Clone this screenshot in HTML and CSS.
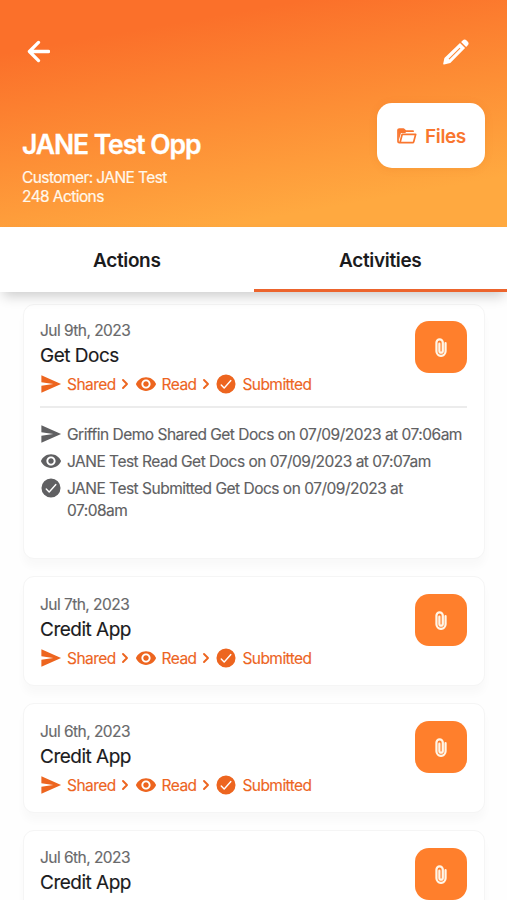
FILE: index.html
```html
<!DOCTYPE html>
<html lang="en">
<head>
<meta charset="utf-8">
<title>JANE Test Opp</title>
<link rel="stylesheet" href="styles.css">
</head>
<body>
<svg class="defs" width="0" height="0" aria-hidden="true">
  <symbol id="send" viewBox="0 0 24 24"><path d="M1.500 21.500 23 12 1.500 2.500V10l13 2-13 2z"/></symbol>
  <symbol id="eye" viewBox="0 0 24 24"><path d="M12 4.500C7 4.500 2.730 7.610 1 12c1.730 4.390 6 7.500 11 7.500s9.270-3.110 11-7.500c-1.730-4.390-6-7.500-11-7.500zM12 17c-2.760 0-5-2.240-5-5s2.240-5 5-5 5 2.240 5 5-2.240 5-5 5zm0-8c-1.660 0-3 1.340-3 3s1.340 3 3 3 3-1.340 3-3-1.340-3-3-3z"/></symbol>
  <symbol id="check" viewBox="0 0 24 24"><path fill-rule="evenodd" d="M12 1.600a10.400 10.400 0 1 0 0 20.800 10.400 10.400 0 0 0 0-20.800zm5.900 7.100-7.300 8.200a.8.8 0 0 1-1.150.05l-3.200-3.200a.8.8 0 0 1 1.130-1.130l2.600 2.600 6.750-7.550a.8.8 0 0 1 1.170 1.030z"/></symbol>
  <symbol id="chevron" viewBox="0 0 8 12"><path class="line" d="M2 2l4 4-4 4" stroke-width="1.900"/></symbol>
  <symbol id="clip" viewBox="0 0 14 22"><path class="line" d="M12.300 6v9.500a5.300 5.300 0 0 1-10.600 0V5.300a3.700 3.700 0 0 1 7.400 0v9.700a2 2 0 0 1-4 0V6.500" stroke-width="2.600"/></symbol>
</svg>

<header class="hero">
  <div class="toolbar">
    <svg class="back" viewBox="0 0 24 24"><path class="line" d="M12 2.500 2.500 12l9.500 9.500M3 12h19.500" stroke-width="3.400"/></svg>
    <svg class="edit" viewBox="0 0 26 26"><path d="M19.600 1.400a2.800 2.800 0 0 1 4 0l1 1a2.800 2.800 0 0 1 0 4l-1.500 1.500-5-5z"/><path fill-rule="evenodd" d="M17 3.900l5.100 5.100L7.300 23.900 1 25.600a.7.7 0 0 1-.8-.8l1.200-5.900zM16.700 8.700 5.600 19.800l.7.7L17.400 9.400z"/></svg>
  </div>
  <div class="summary">
    <div>
      <h1>JANE Test Opp</h1>
      <p>Customer: JANE Test</p>
      <p>248 Actions</p>
    </div>
    <button class="files">
      <svg viewBox="0 0 20 16"><path class="line" d="M3.700 14.700H2.300A1.300 1.300 0 0 1 1 13.400V2.300C1 1.500 1.500 1 2.300 1h4.200l2.200 2.200h7.400M3 14.700 5.200 6.300h13.500l-2 7.400a1.300 1.300 0 0 1-1.200 1z" stroke-width="1.700"/><path d="M1 1h5.500l2.200 2.200V5H4L1.800 12z"/></svg>
      <span>Files</span>
    </button>
  </div>
</header>

<nav class="tabs">
  <a class="tab">Actions</a>
  <a class="tab active">Activities</a>
</nav>

<main class="feed">
  <article class="card">
    <div class="card-head">
      <div>
        <div class="date">Jul 9th, 2023</div>
        <h2>Get Docs</h2>
        <div class="steps"><svg class="icon"><use href="#send"/></svg><span>Shared</span><svg class="chev"><use href="#chevron"/></svg><svg class="icon"><use href="#eye"/></svg><span>Read</span><svg class="chev"><use href="#chevron"/></svg><svg class="icon"><use href="#check"/></svg><span>Submitted</span></div>
      </div>
      <button class="attach"><svg><use href="#clip"/></svg></button>
    </div>
    <ul class="log">
      <li><svg class="icon"><use href="#send"/></svg><span>Griffin Demo Shared Get Docs on 07/09/2023 at 07:06am</span></li>
      <li><svg class="icon"><use href="#eye"/></svg><span>JANE Test Read Get Docs on 07/09/2023 at 07:07am</span></li>
      <li><svg class="icon"><use href="#check"/></svg><span>JANE Test Submitted Get Docs on 07/09/2023 at<br>07:08am</span></li>
    </ul>
  </article>

  <article class="card">
    <div class="card-head">
      <div>
        <div class="date">Jul 7th, 2023</div>
        <h2>Credit App</h2>
        <div class="steps"><svg class="icon"><use href="#send"/></svg><span>Shared</span><svg class="chev"><use href="#chevron"/></svg><svg class="icon"><use href="#eye"/></svg><span>Read</span><svg class="chev"><use href="#chevron"/></svg><svg class="icon"><use href="#check"/></svg><span>Submitted</span></div>
      </div>
      <button class="attach"><svg><use href="#clip"/></svg></button>
    </div>
  </article>

  <article class="card">
    <div class="card-head">
      <div>
        <div class="date">Jul 6th, 2023</div>
        <h2>Credit App</h2>
        <div class="steps"><svg class="icon"><use href="#send"/></svg><span>Shared</span><svg class="chev"><use href="#chevron"/></svg><svg class="icon"><use href="#eye"/></svg><span>Read</span><svg class="chev"><use href="#chevron"/></svg><svg class="icon"><use href="#check"/></svg><span>Submitted</span></div>
      </div>
      <button class="attach"><svg><use href="#clip"/></svg></button>
    </div>
  </article>

  <article class="card">
    <div class="card-head">
      <div>
        <div class="date">Jul 6th, 2023</div>
        <h2>Credit App</h2>
      </div>
      <button class="attach"><svg><use href="#clip"/></svg></button>
    </div>
  </article>
</main>
</body>
</html>
```
FILE: styles.css
```css
* { box-sizing: border-box; }
html, body { height: 900px; }
body {
  margin: 0;
  overflow: hidden;
  display: flex;
  flex-direction: column;
  background: #fefefe;
  color: #1b1b1d;
  font-family: Inter, "Liberation Sans", sans-serif;
  font-size: 15.5px;
  letter-spacing: -0.5px;
}
h1, h2, p, ul { margin: 0; padding: 0; }
button { border: 0; padding: 0; font: inherit; letter-spacing: inherit; }
svg { display: block; flex: none; fill: currentColor; }
.defs { position: absolute; }
.line { fill: none; stroke: currentColor; stroke-linecap: round; stroke-linejoin: round; }

.hero {
  flex: none;
  height: 227px;
  padding: 39px 22px 0 23px;
  color: #fff;
  background: linear-gradient(170deg, #fb702a 17%, #fd8e35 52%, #ffa940 84%);
}
.toolbar { display: flex; justify-content: space-between; padding: 0 16px 0 4px; }
.back { width: 23px; height: 23px; margin-top: 1px; }
.edit { width: 26px; height: 26px; }
.summary { display: flex; justify-content: space-between; margin-top: 38px; }
h1 {
  margin: 23px 0 6px -1px;
  font-size: 26.5px;
  line-height: 36px;
  font-weight: 600;
  letter-spacing: -1.05px;
  -webkit-text-stroke: 0.3px;
}
.summary p { margin-left: -1px; line-height: 19px; letter-spacing: -0.58px; -webkit-text-stroke: 0.2px; color: #fff8ec; }
.files {
  display: flex;
  align-items: center;
  justify-content: center;
  gap: 8px;
  width: 108px;
  height: 65px;
  padding: 1px 0 0 1px;
  border-radius: 15px;
  background: #fff;
  color: #f9762f;
  font-size: 19px;
  font-weight: 600;
  letter-spacing: -0.4px;
  box-shadow: 0 1px 8px rgba(200, 90, 20, 0.12);
}
.files svg { width: 20px; height: 16px; }

.tabs {
  flex: none;
  position: relative;
  display: flex;
  height: 65px;
  background: #fff;
  box-shadow: 0 7px 12px -3px rgba(0, 0, 0, 0.2);
}
.tab {
  flex: 1;
  text-align: center;
  font-size: 19px;
  line-height: 67px;
  font-weight: 600;
  letter-spacing: -0.35px;
}
.tab.active { border-bottom: 3px solid #ec642d; }

.feed { display: flex; flex-direction: column; gap: 17px; padding: 12px 22px 0 23px; }
.card {
  flex: none;
  height: 110px;
  padding: 17px 17px 0 16px;
  border: 1px solid #f5f5f5;
  border-radius: 11px;
  background: #fff;
  box-shadow: 0 8px 8px rgba(0, 0, 0, 0.025);
}
.card:first-child { height: 255px; padding-top: 16px; }
.card-head { display: flex; justify-content: space-between; }
.card + .card:not(:last-child) .card-head > div { padding-top: 1px; }
.date { line-height: 20px; letter-spacing: -0.54px; color: #69696b; }
h2 { line-height: 29px; font-size: 19px; font-weight: 400; letter-spacing: -0.5px; }
.steps { display: flex; align-items: center; height: 28px; letter-spacing: -0.56px; color: #ed651f; }
.icon { width: 22px; height: 22px; margin-right: 5px; }
.chev { width: 8px; height: 12px; margin: 0 5.5px; }
.date, h2, .steps span, .log span { -webkit-text-stroke: 0.15px; }
.attach {
  display: grid;
  place-items: center;
  width: 52px;
  height: 52px;
  border-radius: 14px;
  background: #ff7f2c;
  color: #fff6e8;
}
.attach svg { width: 12px; height: 19px; }

.log { list-style: none; margin-top: 8px; padding-top: 16px; border-top: 2px solid #ececec; color: #606062; }
.log li { display: flex; margin-bottom: 5px; line-height: 22px; white-space: nowrap; }
.log .icon { margin-top: -1px; }
```
